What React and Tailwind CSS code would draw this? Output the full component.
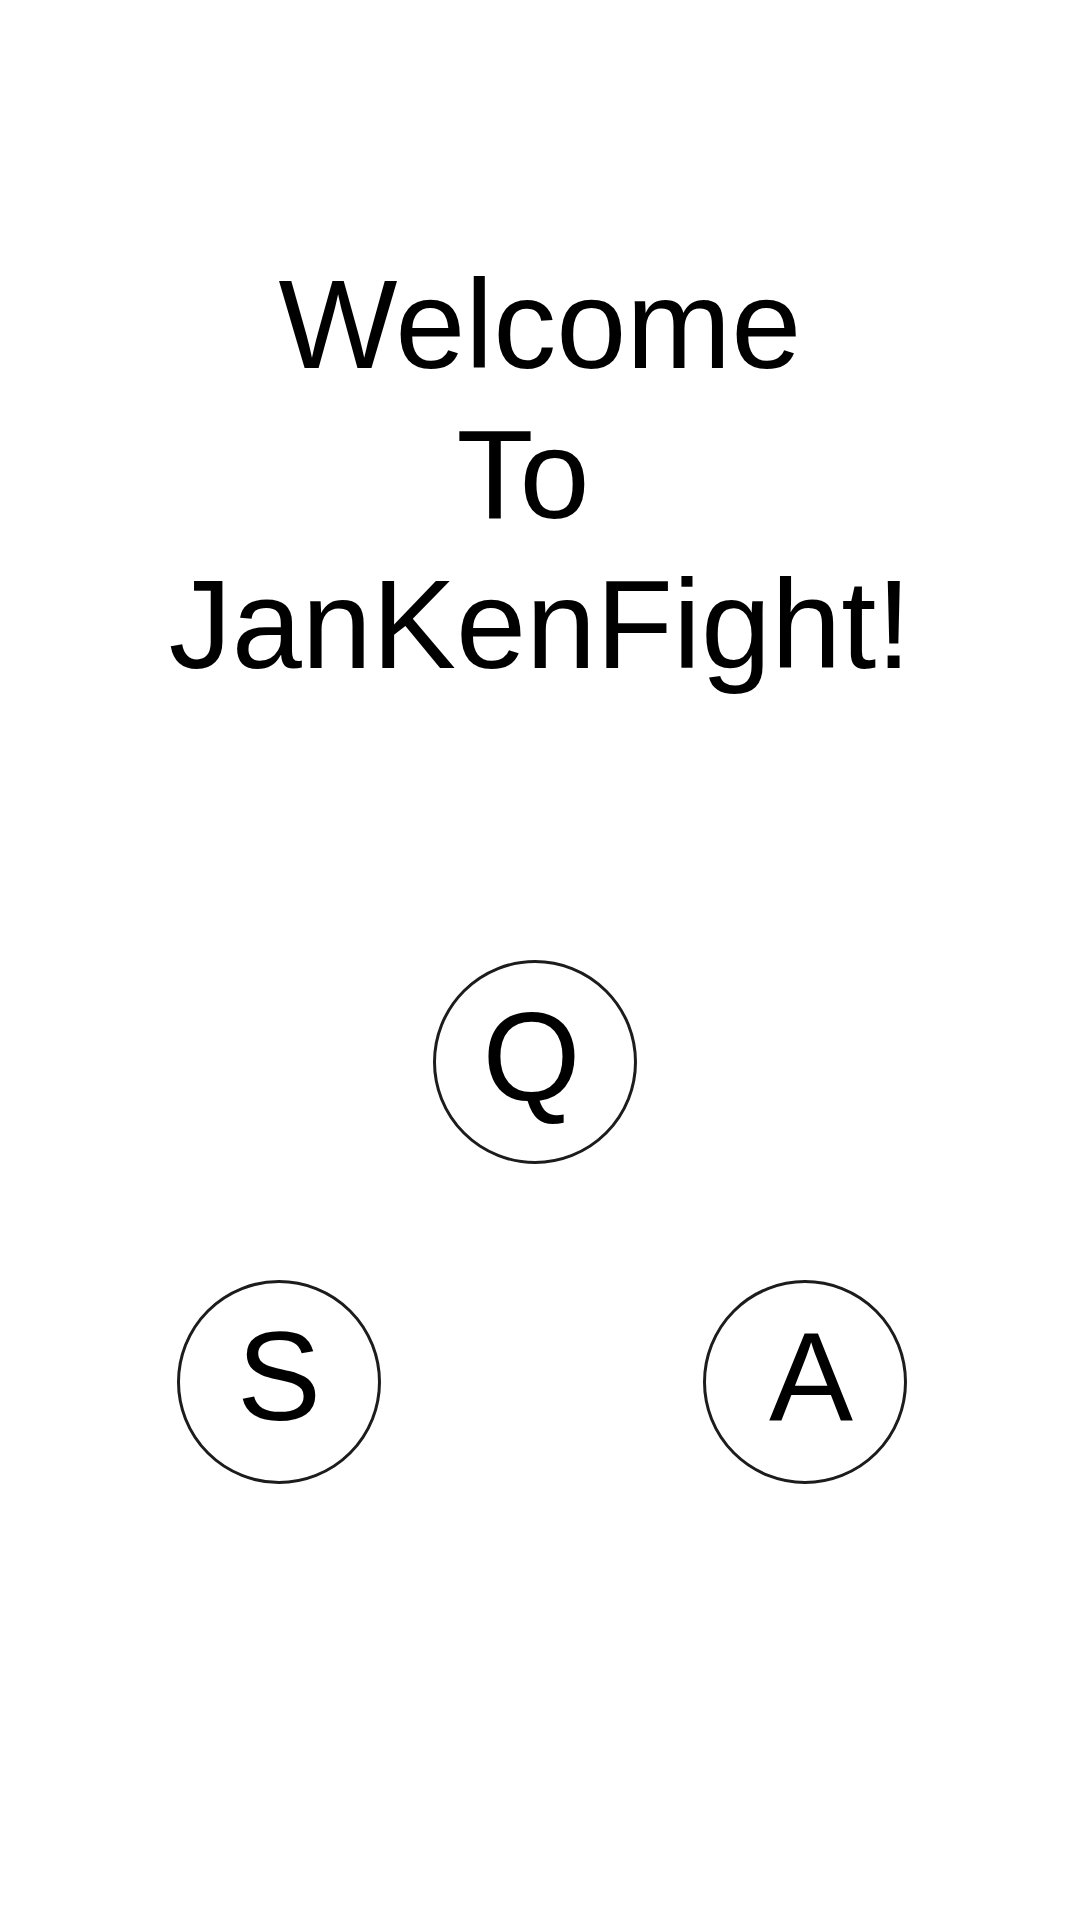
import React from 'react';

const font = { fontFamily: '"Liberation Sans", Arial, sans-serif' };

const KeyCircle = ({ letter, className = '' }) => (
  <div
    className={`w-[204px] h-[204px] shrink-0 rounded-full border-[3px] border-[#1c1c1c] flex items-center justify-center pb-[11px] ${className}`}
  >
    <span className="text-[126px] leading-none text-black">{letter}</span>
  </div>
);

const App = () => {
  return (
    <div className="w-[1080px] h-[1920px] bg-white flex flex-col" style={font}>
      <h1 className="pt-[250px] text-center text-[126px] leading-[150px] font-normal text-black">
        Welcome
        <br />
        <span className="pr-[34px]">To</span>
        <br />
        JanKenFight!
      </h1>

      {/* key buttons */}
      <div className="mt-[260px] flex pl-[433px]">
        <KeyCircle letter="Q" className="pr-[7px]" />
      </div>
      <div className="mt-[116px] flex pl-[177px] gap-[322px]">
        <KeyCircle letter="S" />
        <KeyCircle letter="A" className="pl-[12px]" />
      </div>
    </div>
  );
};

export default App;
